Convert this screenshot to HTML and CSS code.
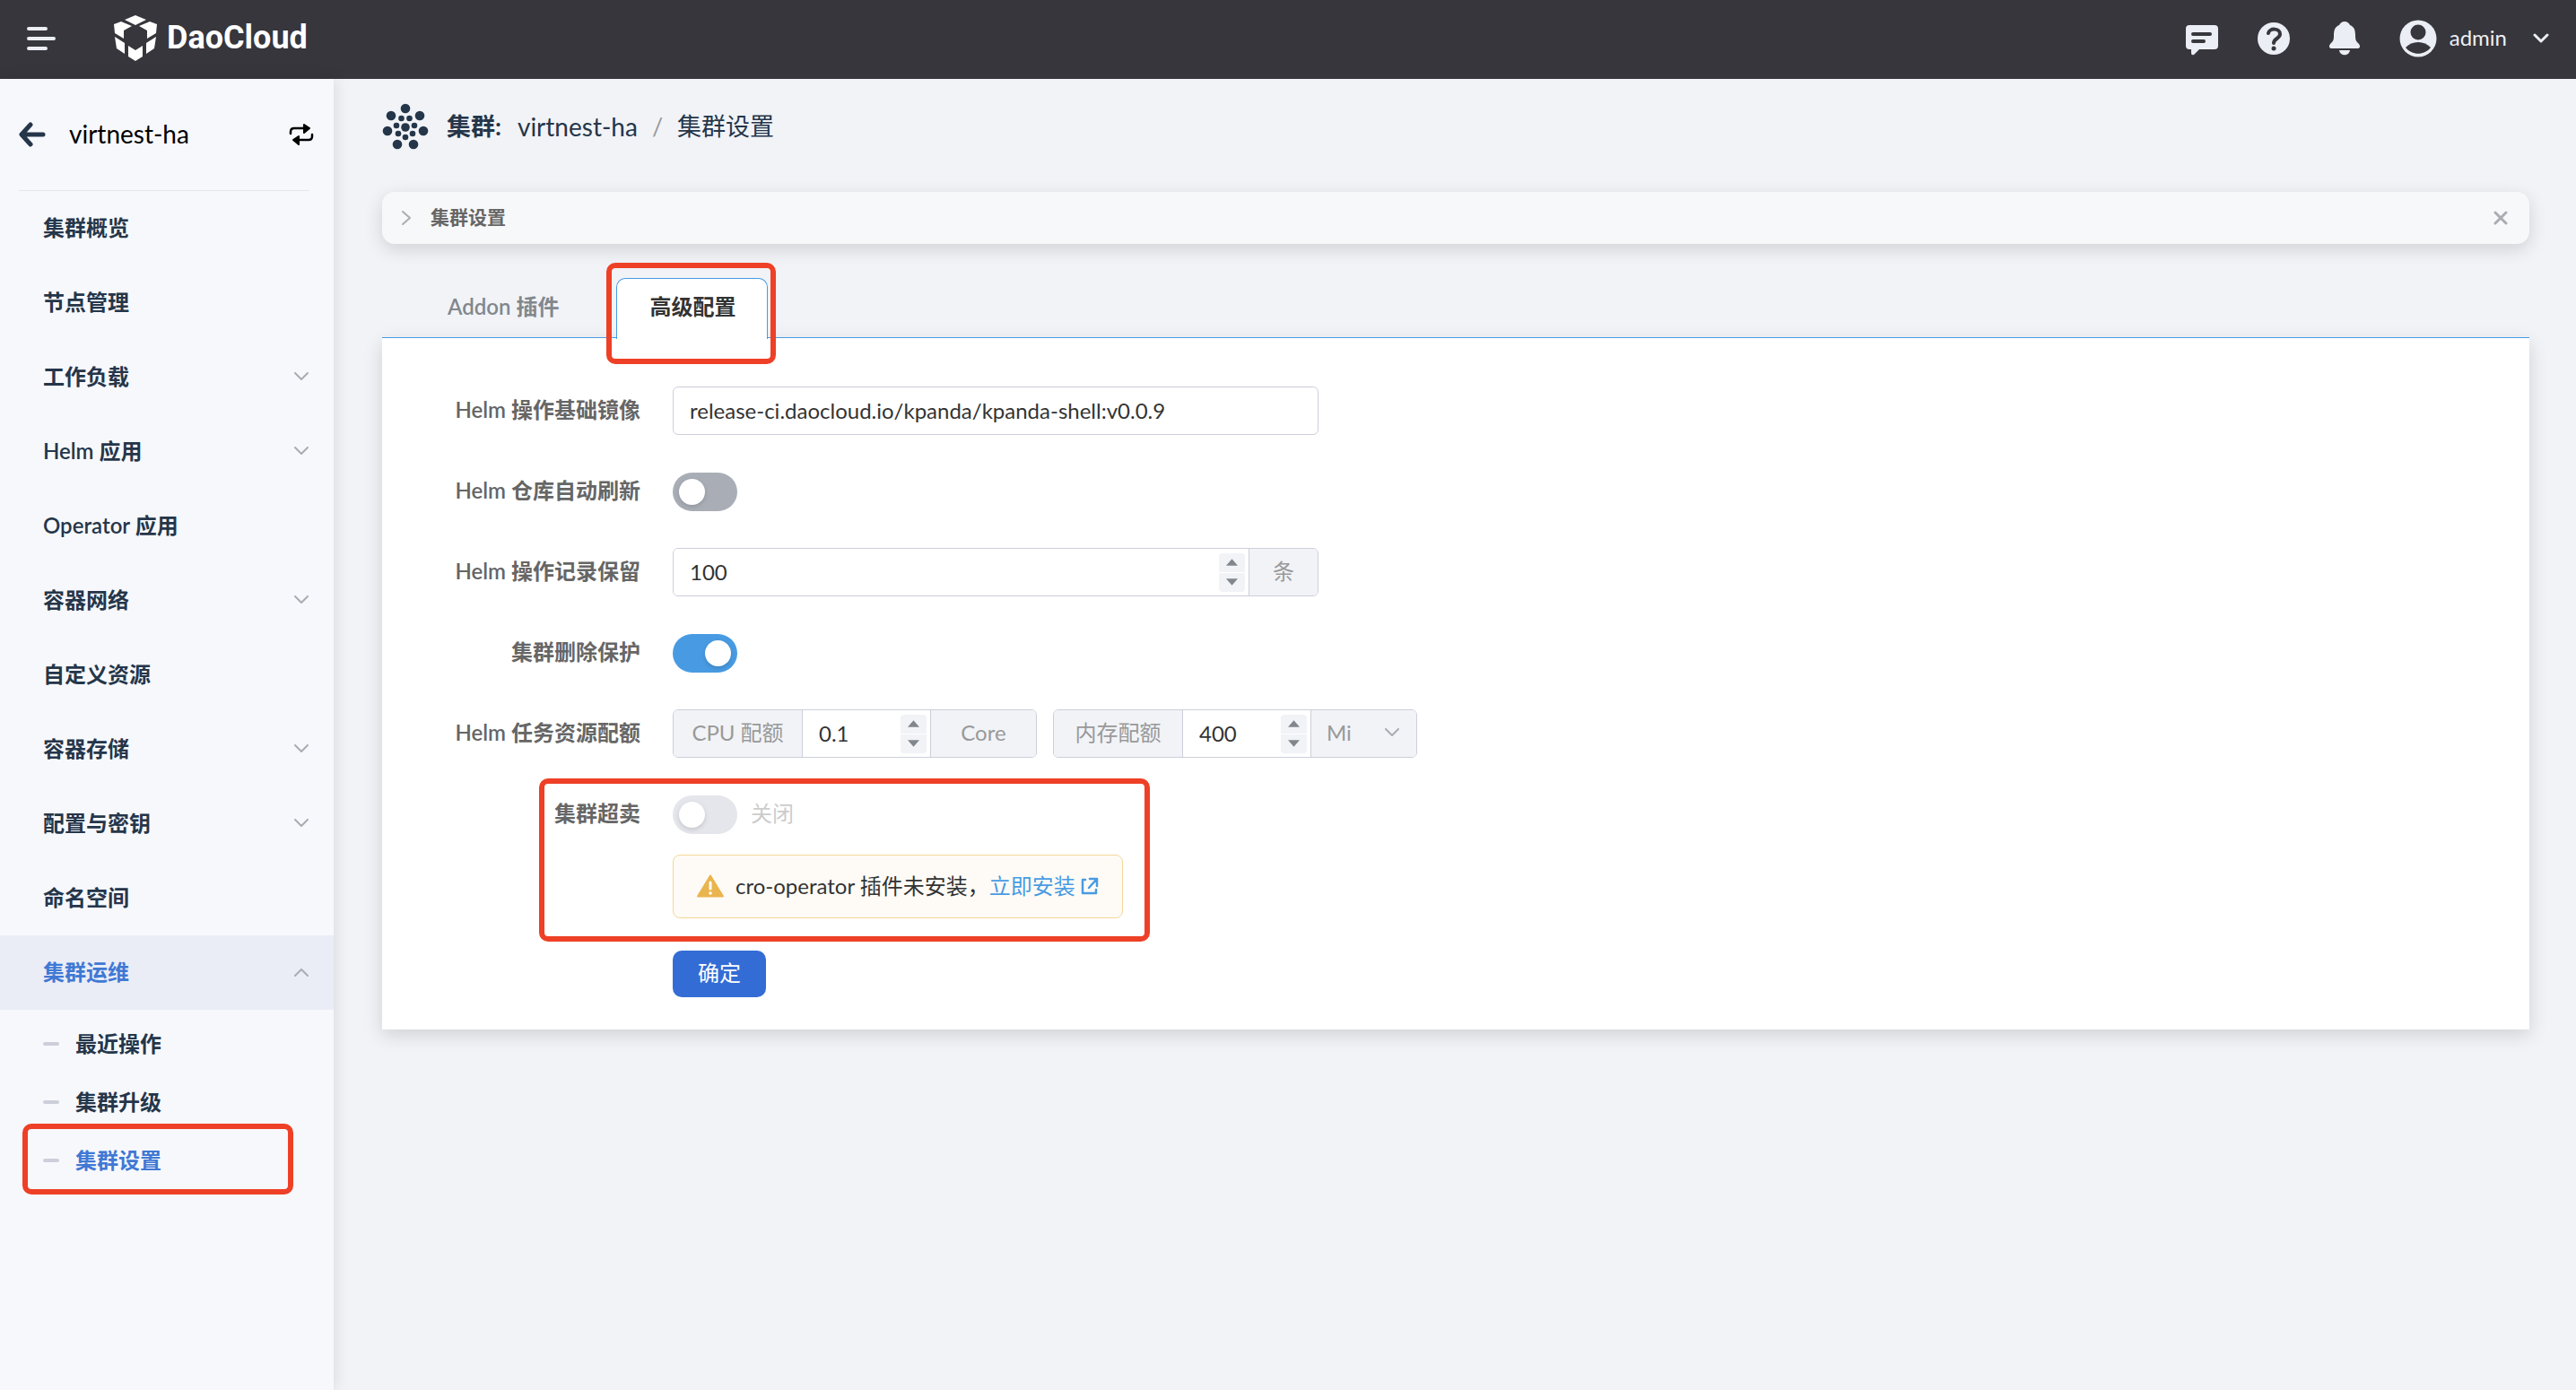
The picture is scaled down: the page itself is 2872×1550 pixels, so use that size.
FILE: index.html
```html
<!DOCTYPE html>
<html lang="zh-CN">

<head>
  <meta charset="UTF-8">
  <meta name="viewport" content="width=device-width, initial-scale=1.0">
  <title>集群设置 - DaoCloud</title>
  <link rel="stylesheet" href="styles.css">
</head>

<body>
  <header class="topbar">
    <button class="icon-btn menu-btn" type="button" aria-label="菜单">
      <svg width="32" height="28" viewBox="0 0 32 28" fill="none" stroke="#eceef5" stroke-width="4" stroke-linecap="round"><path d="M2 3h19M2 14h28M2 25h19"/></svg>
    </button>
    <a href="#" class="logo">
      <svg width="50" height="52" viewBox="0 0 50 52" fill="#fff">
        <path d="M25 0L37 5L25 11L13 5Z"/>
        <path d="M1 10L9 7L21 12L12 17V26L2 20Z"/>
        <path d="M49 10L41 7L29 12L38 17V26L48 20Z"/>
        <path d="M2 24L13 31V43L4 37Z"/>
        <path d="M48 24L37 31V43L46 37Z"/>
        <path d="M17 34L25 39L33 34V46L25 51L17 46Z"/>
      </svg>
      <span class="logo-text">DaoCloud</span>
    </a>
    <div class="topbar-right">
      <button class="icon-btn" type="button" aria-label="消息">
        <svg width="36" height="40" viewBox="0 0 36 40"><path fill="#eceef5" d="M4 5h28q4 0 4 4v19q0 4-4 4H15l-6 6q-3 1-3-2v-4H4q-4 0-4-4V9q0-4 4-4z"/><path d="M8 15h19M8 23h12" stroke="#36363c" stroke-width="4" stroke-linecap="round"/></svg>
      </button>
      <button class="icon-btn" type="button" aria-label="帮助">
        <svg width="36" height="36" viewBox="0 0 36 36" fill="none"><circle cx="18" cy="18" r="18" fill="#eceef5"/><path d="M12 12c1-6 13-6 13 1c0 5-7 5-7 10" stroke="#36363c" stroke-width="4" stroke-linecap="round"/><circle cx="18" cy="29" r="2.500" fill="#36363c"/></svg>
      </button>
      <button class="icon-btn" type="button" aria-label="通知">
        <svg width="34" height="38" viewBox="0 0 34 38" fill="#eceef5"><path d="M17 0c3 0 5 2 6 4c5 2 6 6 6 12c0 6 2 7 4 9c2 3 1 5-2 5H3c-3 0-4-2-2-5c2-2 4-3 4-9c0-6 1-10 6-12c1-2 3-4 6-4z"/><path d="M11 32h12c-1 7-11 7-12 0z"/></svg>
      </button>
      <button class="icon-btn user" type="button">
        <svg width="42" height="42" viewBox="0 0 42 42"><circle cx="21" cy="21" r="20.500" fill="#eceef5"/><circle cx="21" cy="14" r="8.500" fill="#36363c"/><path d="M7 31C14 23 28 23 35 31C28 40 14 40 7 31z" fill="#36363c"/></svg>
        <span>admin</span>
        <svg class="user-arrow" width="18" height="12" viewBox="0 0 18 12" fill="none" stroke="#eceef5" stroke-width="3" stroke-linecap="round" stroke-linejoin="round"><path d="M2 2l7 7l7-7"/></svg>
      </button>
    </div>
  </header>

  <div class="layout">
    <aside class="sidebar">
      <div class="sidebar-head">
        <button class="icon-btn" type="button" aria-label="返回">
          <svg width="30" height="28" viewBox="0 0 30 28" fill="none" stroke="#25364a" stroke-width="5" stroke-linecap="round" stroke-linejoin="round"><path d="M13 3L3 14L13 25M4 14h23"/></svg>
        </button>
        <span class="cluster-name">virtnest-ha</span>
        <button class="icon-btn" type="button" aria-label="切换">
          <svg width="28" height="24" viewBox="0 0 28 24" fill="none" stroke="#000" stroke-width="2.500" stroke-linecap="round"><path d="M2 11V9q0-4 4-4h12M26 12v2q0 4-4 4H10"/><path fill="#000" stroke-linejoin="round" stroke-width="2" d="M17 1l6 4l-6 5zM11 14l-6 4l6 5z"/></svg>
        </button>
      </div>
      <nav>
        <ul class="menu">
          <li><a href="#">集群概览</a></li>
          <li><a href="#">节点管理</a></li>
          <li><a href="#">工作负载<svg class="arrow" viewBox="0 0 16 10"><path d="M1 1l7 7l7-7"/></svg></a></li>
          <li><a href="#">Helm 应用<svg class="arrow" viewBox="0 0 16 10"><path d="M1 1l7 7l7-7"/></svg></a></li>
          <li><a href="#">Operator 应用</a></li>
          <li><a href="#">容器网络<svg class="arrow" viewBox="0 0 16 10"><path d="M1 1l7 7l7-7"/></svg></a></li>
          <li><a href="#">自定义资源</a></li>
          <li><a href="#">容器存储<svg class="arrow" viewBox="0 0 16 10"><path d="M1 1l7 7l7-7"/></svg></a></li>
          <li><a href="#">配置与密钥<svg class="arrow" viewBox="0 0 16 10"><path d="M1 1l7 7l7-7"/></svg></a></li>
          <li><a href="#">命名空间</a></li>
          <li>
            <a href="#" class="active">集群运维<svg class="arrow" viewBox="0 0 16 10"><path d="M1 9l7-7l7 7"/></svg></a>
            <ul class="submenu">
              <li><a href="#">最近操作</a></li>
              <li><a href="#">集群升级</a></li>
              <li class="marked"><a href="#" class="current">集群设置</a></li>
            </ul>
          </li>
        </ul>
      </nav>
    </aside>

    <main class="content">
      <div class="breadcrumb">
        <svg width="52" height="52" viewBox="0 0 52 52" fill="#25364a">
          <circle cx="26" cy="6" r="5.300"/><circle cx="42" cy="14" r="5.300"/><circle cx="46" cy="31" r="5.300"/><circle cx="35" cy="46" r="5.300"/><circle cx="17" cy="46" r="5.300"/><circle cx="6" cy="31" r="5.300"/><circle cx="10" cy="14" r="5.300"/>
          <circle cx="26" cy="27" r="4.800"/>
          <circle cx="21.500" cy="17" r="3.300"/><circle cx="30.500" cy="17" r="3.300"/><circle cx="36" cy="25" r="3.300"/><circle cx="34" cy="34" r="3.300"/><circle cx="26" cy="38" r="3.300"/><circle cx="18" cy="34" r="3.300"/><circle cx="16" cy="25" r="3.300"/>
        </svg>
        <strong>集群:</strong>
        <a href="#">virtnest-ha</a>
        <span class="slash">/</span>
        <span>集群设置</span>
      </div>

      <div class="tip">
        <svg width="12" height="18" viewBox="0 0 12 18" fill="none" stroke="#a9adb3" stroke-width="2" stroke-linecap="round" stroke-linejoin="round"><path d="M2 2l8 7l-8 7"/></svg>
        <span>集群设置</span>
        <button class="icon-btn close" type="button" aria-label="关闭">
          <svg width="16" height="16" viewBox="0 0 16 16" stroke="#a9adb3" stroke-width="3" stroke-linecap="round"><path d="M2 2l12 12M14 2L2 14"/></svg>
        </button>
      </div>

      <div class="tabs">
        <a href="#" class="tab">Addon 插件</a>
        <a href="#" class="tab tab-active">高级配置</a>
      </div>

      <form class="panel">
        <label class="label" for="image">Helm 操作基础镜像</label>
        <div class="field">
          <input id="image" class="input" type="text" value="release-ci.daocloud.io/kpanda/kpanda-shell:v0.0.9">
        </div>

        <label class="label" for="refresh">Helm 仓库自动刷新</label>
        <div class="field"><input id="refresh" class="switch" type="checkbox"></div>

        <label class="label" for="history">Helm 操作记录保留</label>
        <div class="field">
          <div class="group group-wide">
            <div class="number">
              <input id="history" type="number" value="100">
              <span class="stepper">
                <button type="button" aria-label="增加"><svg viewBox="0 0 14 8"><path d="M7 0l7 8H0z"/></svg></button>
                <button type="button" aria-label="减少"><svg viewBox="0 0 14 8"><path d="M7 8l7-8H0z"/></svg></button>
              </span>
            </div>
            <span class="addon addon-unit">条</span>
          </div>
        </div>

        <label class="label" for="protect">集群删除保护</label>
        <div class="field"><input id="protect" class="switch" type="checkbox" checked></div>

        <label class="label" for="cpu">Helm 任务资源配额</label>
        <div class="field quota">
          <div class="group">
            <span class="addon addon-name">CPU 配额</span>
            <div class="number">
              <input id="cpu" type="number" step="0.1" value="0.1">
              <span class="stepper">
                <button type="button" aria-label="增加"><svg viewBox="0 0 14 8"><path d="M7 0l7 8H0z"/></svg></button>
                <button type="button" aria-label="减少"><svg viewBox="0 0 14 8"><path d="M7 8l7-8H0z"/></svg></button>
              </span>
            </div>
            <span class="addon addon-core">Core</span>
          </div>
          <div class="group">
            <label class="addon addon-name" for="memory">内存配额</label>
            <div class="number">
              <input id="memory" type="number" value="400">
              <span class="stepper">
                <button type="button" aria-label="增加"><svg viewBox="0 0 14 8"><path d="M7 0l7 8H0z"/></svg></button>
                <button type="button" aria-label="减少"><svg viewBox="0 0 14 8"><path d="M7 8l7-8H0z"/></svg></button>
              </span>
            </div>
            <div class="unit">
              <select aria-label="内存单位">
                <option>Mi</option>
                <option>Gi</option>
              </select>
              <svg class="arrow" viewBox="0 0 16 10"><path d="M1 1l7 7l7-7"/></svg>
            </div>
          </div>
        </div>

        <div class="oversold">
          <label class="label" for="oversold">集群超卖</label>
          <div class="field">
            <input id="oversold" class="switch" type="checkbox" disabled>
            <span class="switch-text">关闭</span>
          </div>
          <div class="warning">
            <svg width="30" height="26" viewBox="0 0 30 26"><path fill="#eab54e" stroke="#eab54e" stroke-width="2" stroke-linejoin="round" d="M15 1.500L29 24.500H1z"/><path d="M15 9v7" stroke="#fff" stroke-width="3" stroke-linecap="round"/><circle cx="15" cy="21" r="1.800" fill="#fff"/></svg>
            <span>cro-operator 插件未安装，</span>
            <a href="#">立即安装<svg width="20" height="20" viewBox="0 0 20 20" fill="none" stroke="#489be2" stroke-width="2.500" stroke-linecap="round" stroke-linejoin="round"><path d="M5 3H2v15h15v-4M10 2h8v8M18 2L9 12"/></svg></a>
          </div>
        </div>

        <button class="submit" type="button">确定</button>
      </form>
    </main>
  </div>
</body>

</html>
```
FILE: styles.css
```css
* {
  box-sizing: border-box;
  margin: 0;
  padding: 0;
}

body {
  min-height: 100vh;
  display: flex;
  flex-direction: column;
  font-family: Lato, "Noto Sans CJK SC", sans-serif;
  font-size: 24px;
  line-height: 32px;
  color: #333;
  background: #f1f3f7;
}

a {
  text-decoration: none;
  color: inherit;
}

ul {
  list-style: none;
}

svg {
  flex: none;
}

input,
select,
button {
  font: inherit;
  color: inherit;
}

.icon-btn {
  display: flex;
  align-items: center;
  border: none;
  background: none;
  cursor: pointer;
}

/* top bar */
.topbar {
  height: 88px;
  padding: 0 30px 2px;
  display: flex;
  align-items: center;
  background: #36363c;
  color: #eceef5;
}

.logo {
  display: flex;
  align-items: center;
  gap: 10px;
  margin-left: 64px;
  color: #fff;
}

.logo-text {
  padding-bottom: 2px;
  font-family: Roboto, sans-serif;
  font-size: 36px;
  font-weight: 700;
}

.topbar-right {
  display: flex;
  align-items: center;
  gap: 44px;
  margin-left: auto;
}

.user {
  gap: 14px;
}

.user span {
  padding-bottom: 2px;
}

.user-arrow {
  margin-left: 15px;
}

.layout {
  flex: 1;
  display: flex;
}

/* sidebar */
.sidebar {
  flex: none;
  width: 372px;
  background: #f7f8fc;
  color: #25364a;
  box-shadow: 2px 0 16px rgba(0, 0, 0, .1);
}

.sidebar-head {
  height: 125px;
  margin: 0 27px 0 21px;
  display: flex;
  align-items: center;
  border-bottom: 1px solid #e4e6ec;
}

.cluster-name {
  flex: 1;
  margin-left: 26px;
  padding-bottom: 2px;
  font-size: 28px;
  color: #000;
}

.sidebar-head .icon-btn:last-child {
  margin-right: -5px;
}

.menu a {
  display: flex;
  align-items: center;
  height: 83px;
  padding: 0 28px 2px 48px;
  font-weight: 600;
}

.arrow {
  width: 16px;
  height: 10px;
  margin-left: auto;
  fill: none;
  stroke: #a9adb3;
  stroke-width: 2;
  stroke-linecap: round;
  stroke-linejoin: round;
}

.menu .active {
  background: #eaedf6;
  color: #4078d4;
}

.submenu {
  padding-top: 6px;
}

.submenu li {
  position: relative;
}

.submenu a {
  height: 65px;
  gap: 18px;
}

.submenu a::before {
  content: "";
  width: 18px;
  height: 4px;
  border-radius: 2px;
  background: #cccfda;
}

.submenu .current {
  color: #4078d4;
}

/* red highlight frames */
.marked::after,
.tab-active::after,
.oversold::after {
  content: "";
  position: absolute;
  border: 6px solid #ee4026;
  border-radius: 10px;
  pointer-events: none;
}

.marked::after {
  inset: -9px 45px -5px 25px;
}

/* content */
.content {
  flex: 1;
  padding: 26px 52px 52px 54px;
}

.breadcrumb {
  display: flex;
  align-items: center;
  height: 56px;
  padding-bottom: 2px;
  gap: 18px;
  font-size: 27px;
  color: #25364a;
}

.breadcrumb strong {
  margin-left: 2px;
}

.breadcrumb a {
  font-size: 28px;
}

.slash {
  margin: 0 -2px;
  color: #999;
}

.tip {
  display: flex;
  align-items: center;
  height: 58px;
  margin-top: 44px;
  padding: 0 24px 0 21px;
  gap: 21px;
  border-radius: 14px;
  background: #f7f8fa;
  box-shadow: 0 6px 20px rgba(0, 0, 0, .14);
  font-size: 21px;
  font-weight: 600;
  color: #666;
}

.tip span {
  padding-bottom: 2px;
}

.close {
  margin-left: auto;
}

.tabs {
  display: flex;
  gap: 28px;
  margin-top: 38px;
  padding-left: 36px;
  border-bottom: 1px solid #489be2;
  position: relative;
  z-index: 1;
}

.tab {
  height: 66px;
  padding: 0 35px 0 36px;
  border: 1px solid transparent;
  border-bottom: none;
  line-height: 62px;
  font-weight: 600;
  color: #82878d;
}

.tab-active {
  position: relative;
  height: 68px;
  margin-bottom: -2px;
  border-color: #489be2;
  border-radius: 10px 10px 0 0;
  background: #fff;
  color: #333;
}

.tab-active::after {
  inset: -18px -10px -28px -12px;
}

.panel {
  display: grid;
  grid-template-columns: 288px 1fr;
  gap: 36px;
  padding: 54px 0 36px;
  background: #fff;
  box-shadow: 0 6px 20px rgba(0, 0, 0, .14);
}

.label {
  align-self: center;
  padding-bottom: 2px;
  text-align: right;
  font-weight: 600;
  color: #666;
}

.field {
  display: flex;
  align-items: center;
  height: 54px;
}

.input {
  width: 100%;
  max-width: 720px;
  height: 54px;
  padding: 0 18px 2px;
  border: 1px solid #cccfda;
  border-radius: 6px;
  background: #fff;
}

.switch {
  appearance: none;
  width: 72px;
  height: 43px;
  padding: 7px;
  border-radius: 22px;
  background: #a9aeb6;
}

.switch::before {
  content: "";
  display: block;
  width: 29px;
  height: 29px;
  border-radius: 50%;
  background: #fff;
  box-shadow: 0 2px 5px rgba(0, 0, 0, .15);
}

.switch:checked {
  background: #489be2;
}

.switch:checked::before {
  margin-left: auto;
}

.switch:disabled {
  background: #e5e6ec;
}

.switch-text {
  margin-left: 15px;
  padding-bottom: 2px;
  color: #ccc;
}

/* number box with addons on its sides */
.group {
  display: flex;
  height: 54px;
  border: 1px solid #cccfda;
  border-radius: 6px;
  overflow: hidden;
}

.group-wide {
  width: 100%;
  max-width: 720px;
}

.group-wide .number {
  flex: 1;
}

.number {
  display: flex;
  align-items: center;
  width: 142px;
  padding-right: 4px;
}

.number input {
  flex: 1;
  min-width: 0;
  height: 52px;
  padding: 0 0 2px 18px;
  border: none;
  appearance: textfield;
}

.number input::-webkit-inner-spin-button {
  appearance: none;
}

.stepper {
  display: flex;
  flex-direction: column;
  gap: 1px;
  width: 29px;
  border-radius: 4px;
  overflow: hidden;
}

.stepper button {
  display: flex;
  align-items: center;
  justify-content: center;
  height: 21px;
  border: none;
  background: #f1f3f7;
}

.stepper svg {
  width: 13px;
  height: 8px;
  fill: #82878d;
}

.addon,
.unit {
  display: flex;
  align-items: center;
  justify-content: center;
  padding-bottom: 2px;
  background: #f1f3f7;
  color: #999;
}

.addon-name {
  width: 144px;
  border-right: 1px solid #cccfda;
}

.addon-unit {
  width: 77px;
  border-left: 1px solid #cccfda;
}

.addon-core,
.unit {
  width: 118px;
  border-left: 1px solid #cccfda;
}

.unit {
  position: relative;
}

.unit select {
  width: 100%;
  height: 52px;
  padding-left: 17px;
  border: none;
  appearance: none;
  background: none;
}

.unit .arrow {
  position: absolute;
  right: 19px;
  pointer-events: none;
}

.quota {
  gap: 18px;
}

.oversold {
  grid-column: 1 / -1;
  justify-self: start;
  position: relative;
  display: grid;
  grid-template-columns: 288px auto;
  gap: 18px 36px;
}

.oversold::after {
  inset: -13px -30px -26px 175px;
}

.warning {
  grid-column: 2;
  display: flex;
  align-items: center;
  height: 71px;
  padding: 0 26px 2px;
  border: 1px solid #f3d797;
  border-radius: 8px;
  background: #fefbf6;
}

.warning span {
  margin-left: 13px;
}

.warning a {
  display: flex;
  align-items: center;
  gap: 6px;
  color: #489be2;
}

.submit {
  grid-column: 2;
  justify-self: start;
  height: 52px;
  padding: 0 28px 2px;
  border: none;
  border-radius: 10px;
  background: #346cd5;
  color: #fff;
}
```
